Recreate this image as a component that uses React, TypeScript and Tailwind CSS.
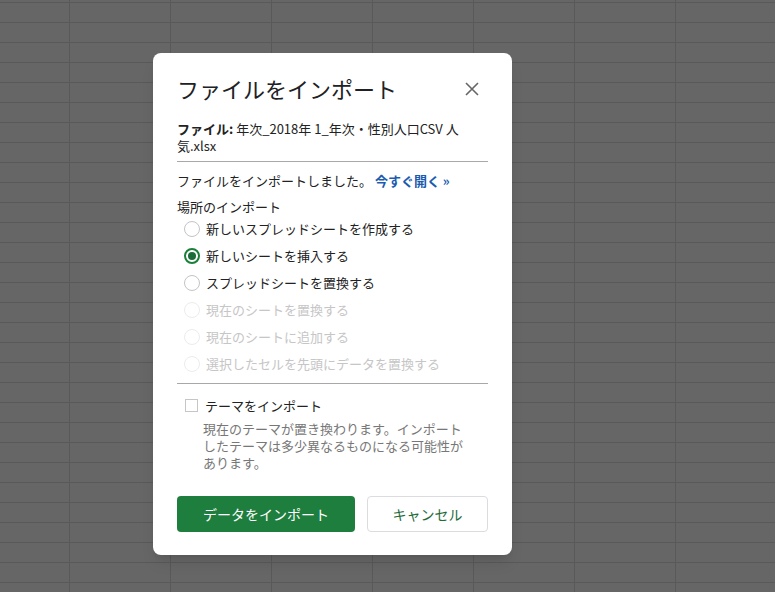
import React from "react";

const font = { fontFamily: '"Noto Sans CJK JP", "Noto Sans", Arial, sans-serif' };

function Radio({ label, checked, disabled }: { label: string; checked?: boolean; disabled?: boolean }) {
  return (
    <div className="flex h-[27px] items-center pl-[7px]">
      {checked ? (
        <span className="flex h-[16px] w-[16px] items-center justify-center rounded-full border-2 border-[#188038]">
          <span className="h-[8px] w-[8px] rounded-full bg-[#1e6b3a]" />
        </span>
      ) : (
        <span
          className={
            "h-[16px] w-[16px] rounded-full border " +
            (disabled ? "border-[#ececec]" : "border-[#c4c4c4]")
          }
        />
      )}
      <span className={"ml-[6px] text-[13px] leading-[17px] " + (disabled ? "text-[#c6c6c6]" : "text-[#222222]")}>
        {label}
      </span>
    </div>
  );
}

export default function App() {
  const rows = Array.from({ length: 30 });
  const cols = Array.from({ length: 7 });
  return (
    <div className="relative h-[592px] w-[775px] overflow-hidden bg-[#666666]" style={font}>
      {/* spreadsheet grid behind the overlay */}
      <div className="absolute inset-0 flex flex-col pt-[2px]">
        <div className="h-0 border-t border-[#595959]" />
        {rows.map((_, i) => (
          <div key={i} className="h-[20px] shrink-0 border-b border-[#595959]" />
        ))}
      </div>
      <div className="absolute inset-0 flex">
        <div className="h-full w-[70px] shrink-0 border-r border-[#595959]" />
        {cols.map((_, i) => (
          <div key={i} className="h-full w-[101px] shrink-0 border-r border-[#595959]" />
        ))}
      </div>

      {/* dialog */}
      <div className="absolute left-[153px] top-[53px] flex w-[359px] flex-col rounded-[8px] bg-white px-6 pb-[23px] pt-[20px] shadow-lg">
        <div className="flex h-[30px] items-center justify-between">
          <h1 className="text-[22px] font-normal leading-[30px] text-[#202124]">ファイルをインポート</h1>
          <svg width="14" height="14" viewBox="0 0 14 14" className="mr-[9px] mt-[2px]">
            <path d="M1 1 L13 13 M13 1 L1 13" stroke="#666666" strokeWidth="1.6" />
          </svg>
        </div>

        <p className="mt-[17px] text-[13px] leading-[17px] text-[#222222]">
          <span className="font-bold">ファイル:</span> 年次_2018年 1_年次・性別人口CSV 人
          <br />
          気.xlsx
        </p>

        <div className="mt-[7px] h-px bg-[#a8a8a8]" />

        <p className="mt-[10px] text-[13px] leading-[17px] text-[#222222]">
          ファイルをインポートしました。 <span className="font-bold text-[#1a5bb0]">今すぐ開く »</span>
        </p>

        <p className="mt-[9px] text-[13px] leading-[17px] text-[#222222]">場所のインポート</p>

        <div className="flex flex-col">
          <Radio label="新しいスプレッドシートを作成する" />
          <Radio label="新しいシートを挿入する" checked />
          <Radio label="スプレッドシートを置換する" />
          <Radio label="現在のシートを置換する" disabled />
          <Radio label="現在のシートに追加する" disabled />
          <Radio label="選択したセルを先頭にデータを置換する" disabled />
        </div>

        <div className="mt-[6px] h-px bg-[#a8a8a8]" />

        <div className="mt-[13px] flex items-center pl-[8px]">
          <span className="h-[13px] w-[13px] border border-[#c6c6c6]" />
          <span className="ml-[7px] text-[13px] leading-[17px] text-[#222222]">テーマをインポート</span>
        </div>

        <p className="ml-[26px] mt-[6px] w-[268px] text-[13px] leading-[17px] text-[#777777]">
          現在のテーマが置き換わります。インポートしたテーマは多少異なるものになる可能性があります。
        </p>

        <div className="mt-[25px] flex gap-[12px]">
          <button className="h-[36px] w-[178px] rounded-[4px] bg-[#1e7e3e] text-[14px] text-white">
            データをインポート
          </button>
          <button className="h-[36px] w-[121px] rounded-[4px] border border-[#dadce0] bg-white text-[14px] text-[#1e6b3a]">
            キャンセル
          </button>
        </div>
      </div>
    </div>
  );
}
